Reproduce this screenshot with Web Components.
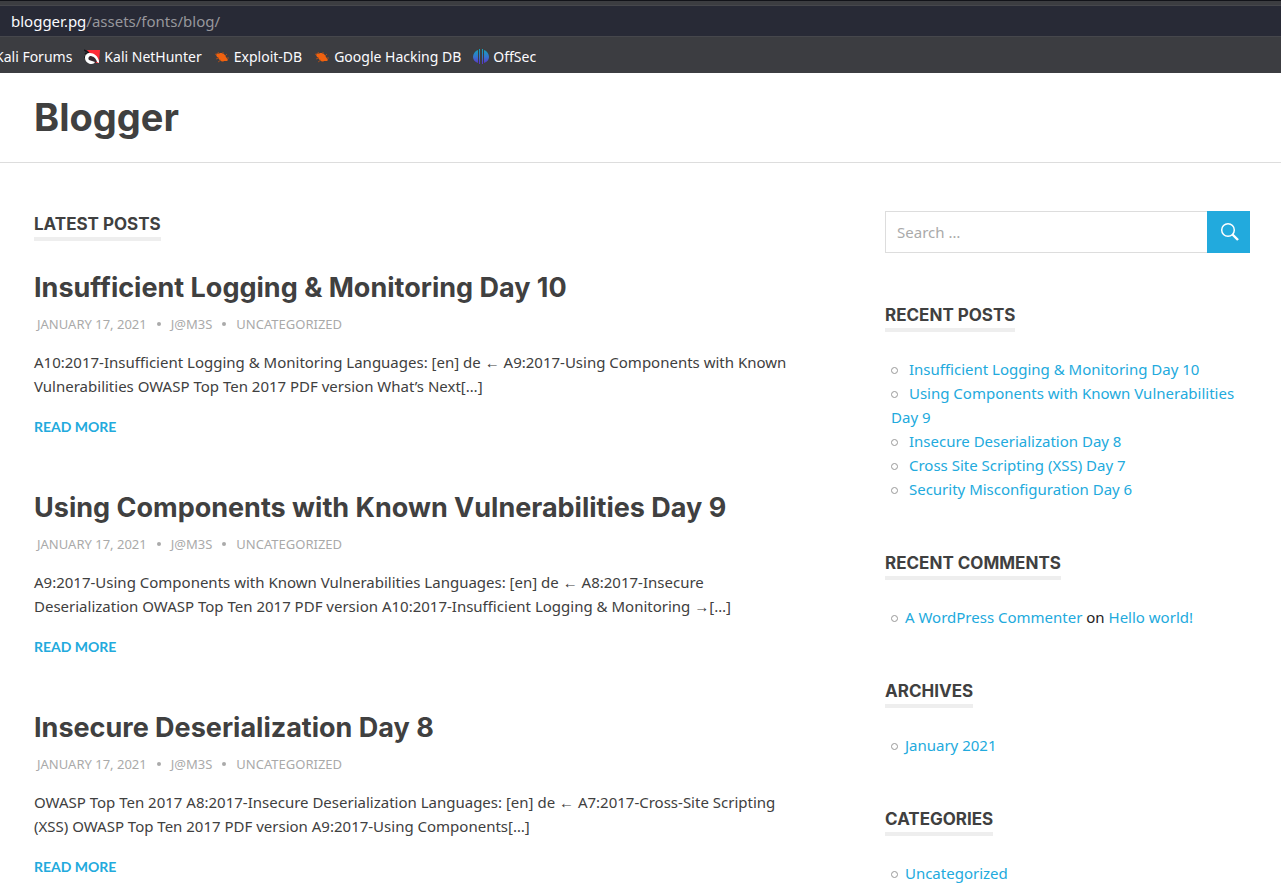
<!DOCTYPE html>
<html lang="en">
<head>
<meta charset="utf-8">
<title>Blogger</title>
<style>
  html { background: #fff; }
  body { margin: 0; font-family: "Noto Sans", sans-serif; font-size: 15px; line-height: 24px; color: #404040; --heading-font: "Inter", sans-serif; }
</style>
</head>
<body>
<browser-bar host="blogger.pg" path="/assets/fonts/blog/">
  <bookmark-link>Kali Forums</bookmark-link>
  <bookmark-link icon="kali">Kali NetHunter</bookmark-link>
  <bookmark-link icon="bug">Exploit-DB</bookmark-link>
  <bookmark-link icon="bug">Google Hacking DB</bookmark-link>
  <bookmark-link icon="offsec">OffSec</bookmark-link>
</browser-bar>
<site-header>Blogger</site-header>
<blog-layout>
  <section-title>Latest Posts</section-title>
  <blog-post>
    <span slot="title">Insufficient Logging &amp; Monitoring Day 10</span>
    A10:2017-Insufficient Logging &amp; Monitoring Languages: [en] de ← A9:2017-Using Components with Known Vulnerabilities OWASP Top Ten 2017 PDF version What’s Next[…]
  </blog-post>
  <blog-post>
    <span slot="title">Using Components with Known Vulnerabilities Day 9</span>
    A9:2017-Using Components with Known Vulnerabilities Languages: [en] de ← A8:2017-Insecure Deserialization OWASP Top Ten 2017 PDF version A10:2017-Insufficient Logging &amp; Monitoring →[…]
  </blog-post>
  <blog-post>
    <span slot="title">Insecure Deserialization Day 8</span>
    OWASP Top Ten 2017 A8:2017-Insecure Deserialization Languages: [en] de ← A7:2017-Cross-Site Scripting (XSS) OWASP Top Ten 2017 PDF version A9:2017-Using Components[…]
  </blog-post>
  <search-form slot="side"></search-form>
  <side-widget slot="side" heading="Recent Posts">
    <list-entry spaced><text-link>Insufficient Logging &amp; Monitoring Day 10</text-link></list-entry>
    <list-entry spaced><text-link>Using Components with Known Vulnerabilities Day 9</text-link></list-entry>
    <list-entry spaced><text-link>Insecure Deserialization Day 8</text-link></list-entry>
    <list-entry spaced><text-link>Cross Site Scripting (XSS) Day 7</text-link></list-entry>
    <list-entry spaced><text-link>Security Misconfiguration Day 6</text-link></list-entry>
  </side-widget>
  <side-widget slot="side" heading="Recent Comments">
    <list-entry><text-link>A WordPress Commenter</text-link> on <text-link>Hello world!</text-link></list-entry>
  </side-widget>
  <side-widget slot="side" heading="Archives">
    <list-entry><text-link>January 2021</text-link></list-entry>
  </side-widget>
  <side-widget slot="side" heading="Categories">
    <list-entry><text-link>Uncategorized</text-link></list-entry>
  </side-widget>
</blog-layout>
<script>
const define = (name, html, setup) => customElements.define(name, class extends HTMLElement {
  constructor() {
    super();
    const template = document.createElement('template');
    template.innerHTML = html;
    this.attachShadow({ mode: 'open' }).append(template.content.cloneNode(true));
  }
  connectedCallback() { if (setup) setup(this, this.shadowRoot); }
});

const icons = {
  kali: `<svg viewBox="0 0 16 16" width="16" height="16" aria-hidden="true">
    <path d="M3 1h13l-1 13h-3z" fill="#ff2a35"/>
    <path d="M0 1l5 3M1 4l3 2M0 8l3 1M3 13l2-2" stroke="#17171b" stroke-width="1.5" fill="none"/>
    <path d="M5 7c2-2 6-1 9 5l-3 2-6-3z" fill="#3a2a30"/>
    <path d="M1 9c0-3 2-5 5-5 4 0 8 3 9 8v2l-2-1c-1-4-4-6-7-6-2 1-2 3-1 4 2 1 4 1 6 2-1 2-3 2-5 2-3-1-5-3-5-6z" fill="#fff"/></svg>`,
  bug: `<svg viewBox="0 0 16 16" width="16" height="16" aria-hidden="true">
    <path d="M2 5c1-1 3 0 4-1 4 0 5 2 6 4l2 3-1 1-3 0c-2 1-4 0-5-2-1-2-3-2-3-5z" fill="#f0620f"/>
    <path d="M5 5L4 3M9 5V3M11 7l2-2M13 9h2M5 9l-3 1M7 11l-3 2M9 12v1M3 6L1 5" stroke="#a34c1c" fill="none"/></svg>`,
  offsec: `<svg viewBox="0 0 16 16" width="16" height="16" aria-hidden="true">
    <defs><linearGradient id="g" gradientUnits="userSpaceOnUse" x1="0" y1="0" x2="0" y2="16"><stop stop-color="#12a5b8"/><stop offset=".5" stop-color="#3673d0"/><stop offset="1" stop-color="#6425c4"/></linearGradient></defs>
    <path d="M5 1v13C2 13 0 11 0 8s2-6 5-7zM11 1v13c3-1 5-3 5-6s-2-6-5-7zM6 0h1v15H6zM9 0h1v15H9z" fill="url(#g)"/></svg>`
};

define('browser-bar', `
  <style>
    :host { display: block; background: #3c3d41; border-top: 1px solid #121319; font-family: "Noto Sans", sans-serif; font-size: 14px; line-height: 20px; color: #fbfbfe; }
    .address { margin-top: 4px; background: #282a36; border: solid #46474c; border-width: 1px 0; padding: 5px 11px; font-size: 15px; }
    .path { color: #97979c; }
    nav { display: flex; gap: 12px; padding: 10px 0 6px; margin-left: -5px; overflow: hidden; }
  </style>
  <div class="address"><span class="host"></span><span class="path"></span></div>
  <nav aria-label="Bookmarks"><slot></slot></nav>`,
  (el, root) => {
    root.querySelector('.host').textContent = el.getAttribute('host');
    root.querySelector('.path').textContent = el.getAttribute('path');
  });

define('bookmark-link', `
  <style>
    :host { display: block; flex: none; }
    a { display: flex; align-items: center; gap: 4px; color: inherit; text-decoration: none; }
    .icon { display: flex; }
    .icon:empty { display: none; }
  </style>
  <a href="#"><span class="icon"></span><slot></slot></a>`,
  (el, root) => { root.querySelector('.icon').innerHTML = icons[el.getAttribute('icon')] || ''; });

define('site-header', `
  <style>
    :host { display: block; padding: 20px 34px; border-bottom: 1px solid #ddd; }
    a { font-family: var(--heading-font); font-size: 38px; line-height: 49px; font-weight: 700; color: #404040; text-decoration: none; display: inline-block; vertical-align: top; }
  </style>
  <header><a href="#"><slot></slot></a></header>`);

define('blog-layout', `
  <style>
    :host { display: grid; grid-template-columns: 20fr 9fr; gap: 40px; padding: 48px 31px 0 34px; }
    main, aside { min-width: 0; }
    aside { display: flex; flex-direction: column; gap: 49px; }
  </style>
  <main><slot></slot></main>
  <aside><slot name="side"></slot></aside>`);

define('section-title', `
  <style>
    :host { display: block; }
    h2 { margin: 0; width: fit-content; font-family: var(--heading-font); font-size: 17px; line-height: 26px; font-weight: 700; text-transform: uppercase; border-bottom: 4px solid #eee; }
  </style>
  <h2><slot></slot></h2>`);

define('blog-post', `
  <style>
    :host { display: block; margin: 29px 0 51px; }
    h3 { margin: 0; font-family: var(--heading-font); font-size: 27px; line-height: 36px; font-weight: 700; }
    a { color: inherit; text-decoration: none; }
    .meta { display: flex; align-items: center; gap: 10px; margin: 8px 0 16px 3px; font-size: 13px; line-height: 20px; color: #aaa; text-transform: uppercase; }
    .dot { width: 4px; height: 4px; border-radius: 50%; background: #aaa; }
    p { margin: 0 0 17px; padding-right: 40px; }
    .more { display: block; width: fit-content; font-family: "Lato", sans-serif; font-size: 14px; font-weight: 700; color: #22aadd; text-transform: uppercase; }
  </style>
  <article>
    <h3><a href="#"><slot name="title"></slot></a></h3>
    <div class="meta"><a href="#">January 17, 2021</a><span class="dot"></span><a href="#">j@m3s</a><span class="dot"></span><a href="#">Uncategorized</a></div>
    <p><slot></slot></p>
    <a class="more" href="#">Read more</a>
  </article>`);

define('search-form', `
  <style>
    :host { display: block; }
    form { display: flex; height: 42px; }
    input { flex: 1; min-width: 0; box-sizing: border-box; margin: 0; padding: 0 11px; border: 1px solid #ddd; border-right: 0; border-radius: 0; background: #fff; font: inherit; color: inherit; }
    input::placeholder { color: #aaa; opacity: 1; }
    button { display: flex; align-items: center; justify-content: center; width: 43px; margin: 0; padding: 0 0 0 2px; border: 0; background: #22aadd; }
  </style>
  <form role="search">
    <input type="search" aria-label="Search for:" placeholder="Search …">
    <button type="button" aria-label="Search"><svg viewBox="0 0 20 20" width="20" height="20" fill="none" stroke="#fff" aria-hidden="true"><circle cx="8" cy="8" r="6.3" stroke-width="1.5"/><path d="M12.5 12.5l5.5 5.5" stroke-width="2.4"/></svg></button>
  </form>`);

define('side-widget', `
  <style>
    :host { display: block; }
    [role=list] { margin-top: 25px; }
  </style>
  <section><section-title></section-title><div role="list"><slot></slot></div></section>`,
  (el, root) => { root.querySelector('section-title').textContent = el.getAttribute('heading'); });

define('list-entry', `
  <style>
    :host { display: block; padding-left: 6px; color: #222; }
    :host::before { content: ""; display: inline-block; box-sizing: border-box; width: 7px; height: 7px; margin-right: 3px; border: 1px solid #999; border-radius: 50%; vertical-align: 1px; }
    :host([spaced])::before { margin-right: 7px; }
  </style>
  <slot></slot>`, el => el.setAttribute('role', 'listitem'));

define('text-link', `
  <style>
    :host { display: inline; }
    a { color: #22aadd; text-decoration: none; }
  </style>
  <a href="#"><slot></slot></a>`);
</script>
</body>
</html>
